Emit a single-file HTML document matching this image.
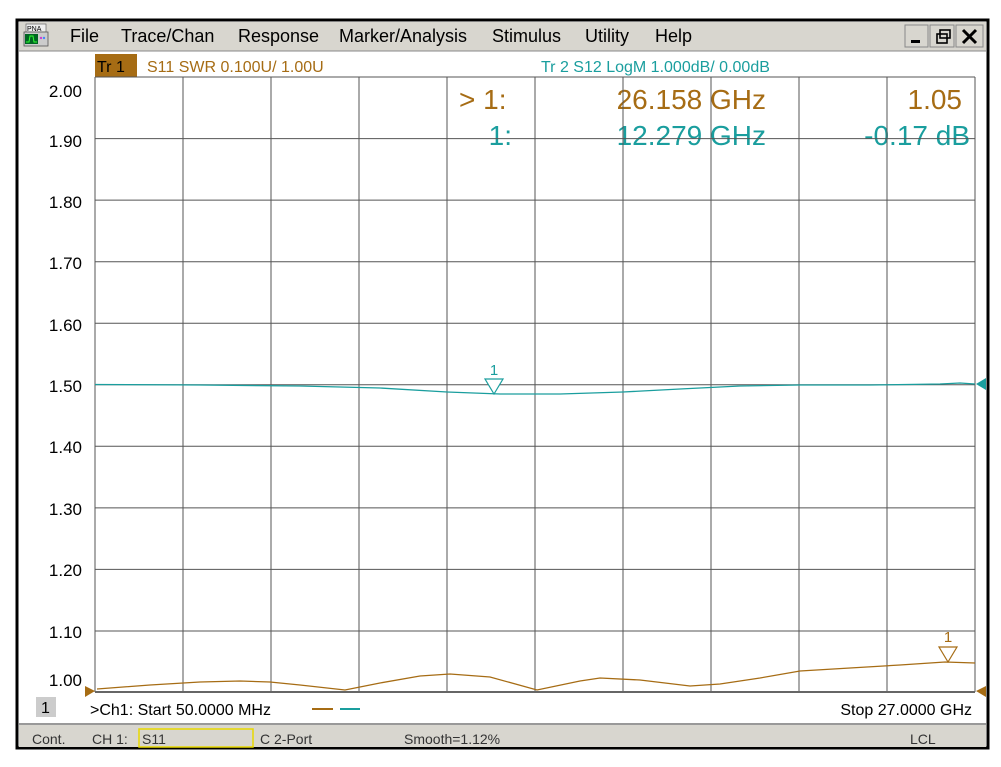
<!DOCTYPE html>
<html><head><style>
body{margin:0;background:#fff;width:1001px;height:762px;overflow:hidden;font-family:"Liberation Sans",sans-serif;}
</style></head><body>
<svg width="1001" height="762" xmlns="http://www.w3.org/2000/svg" font-family="Liberation Sans, sans-serif">
<rect x="0" y="0" width="1001" height="762" fill="#fff"/>
<!-- outer frame -->
<rect x="17" y="20" width="971" height="728" fill="#fff" stroke="#000" stroke-width="3"/>
<!-- menu bar -->
<rect x="19" y="22" width="967" height="29" fill="#d8d6cf"/>
<line x1="19" y1="51" x2="986" y2="51" stroke="#888" stroke-width="1"/>
<!-- PNA icon -->
<rect x="26" y="24" width="20" height="8" fill="#eee" stroke="#666" stroke-width="0.7"/>
<text x="27" y="31" font-size="7" fill="#000">PNA</text>
<rect x="24" y="32" width="24" height="14" fill="#ccc" stroke="#555" stroke-width="0.8"/>
<rect x="25" y="34" width="13" height="10" fill="#062"/>
<path d="M26 42 L29 42 L30 36 L33 36 L34 42 L37 42" stroke="#3f3" fill="none" stroke-width="1"/>
<circle cx="41" cy="38" r="1.2" fill="#c4c"/><circle cx="44" cy="38" r="1.2" fill="#48f"/>
<g font-size="18" fill="#000">
<text x="70" y="42">File</text>
<text x="121" y="42">Trace/Chan</text>
<text x="238" y="42">Response</text>
<text x="339" y="42">Marker/Analysis</text>
<text x="492" y="42">Stimulus</text>
<text x="585" y="42">Utility</text>
<text x="655" y="42">Help</text>
</g>
<!-- window buttons -->
<g stroke="#888" fill="#d8d6cf">
<rect x="905" y="25" width="23" height="22"/><rect x="930" y="25" width="24" height="22"/><rect x="956" y="25" width="27" height="22"/>
</g>
<rect x="911" y="40" width="9" height="3" fill="#000"/>
<rect x="937" y="34" width="10" height="9" fill="none" stroke="#000" stroke-width="1.6"/>
<rect x="940" y="30" width="10" height="8" fill="none" stroke="#000" stroke-width="1.6"/>
<path d="M963 30 L976 43 M976 30 L963 43" stroke="#000" stroke-width="3"/>
<!-- trace header -->
<rect x="95" y="54" width="42" height="23" fill="#a66c14"/>
<text x="97" y="72" font-size="16" fill="#000">Tr 1</text>
<text x="147" y="72" font-size="16" fill="#a66c14">S11 SWR 0.100U/  1.00U</text>
<text x="541" y="72" font-size="16" fill="#1a9e9e">Tr  2   S12 LogM 1.000dB/  0.00dB</text>
<!-- marker readouts -->
<g font-size="28">
<text x="459" y="109" fill="#a66c14">&gt; 1:</text>
<text x="766" y="109" fill="#a66c14" text-anchor="end">26.158 GHz</text>
<text x="962" y="109" fill="#a66c14" text-anchor="end">1.05</text>
<text x="512" y="145" fill="#1a9e9e" text-anchor="end">1:</text>
<text x="766" y="145" fill="#1a9e9e" text-anchor="end">12.279 GHz</text>
<text x="970" y="145" fill="#1a9e9e" text-anchor="end">-0.17 dB</text>
</g>
<!-- grid -->
<g stroke="#555" stroke-width="1">
<line x1="95" y1="77" x2="975" y2="77"/>
<line x1="95" y1="138.6" x2="975" y2="138.6"/>
<line x1="95" y1="200.1" x2="975" y2="200.1"/>
<line x1="95" y1="261.7" x2="975" y2="261.7"/>
<line x1="95" y1="323.2" x2="975" y2="323.2"/>
<line x1="95" y1="384.8" x2="975" y2="384.8"/>
<line x1="95" y1="446.3" x2="975" y2="446.3"/>
<line x1="95" y1="507.9" x2="975" y2="507.9"/>
<line x1="95" y1="569.4" x2="975" y2="569.4"/>
<line x1="95" y1="631" x2="975" y2="631"/>
<line x1="183" y1="77" x2="183" y2="692"/><line x1="271" y1="77" x2="271" y2="692"/>
<line x1="359" y1="77" x2="359" y2="692"/><line x1="447" y1="77" x2="447" y2="692"/>
<line x1="535" y1="77" x2="535" y2="692"/><line x1="623" y1="77" x2="623" y2="692"/>
<line x1="711" y1="77" x2="711" y2="692"/><line x1="799" y1="77" x2="799" y2="692"/>
<line x1="887" y1="77" x2="887" y2="692"/>
<line x1="95" y1="77" x2="95" y2="692"/><line x1="975" y1="77" x2="975" y2="692"/>
</g>
<line x1="95" y1="692" x2="975" y2="692" stroke="#666" stroke-width="2"/>
<!-- y labels -->
<g font-size="17" fill="#000" text-anchor="end">
<text x="82" y="97">2.00</text><text x="82" y="147">1.90</text><text x="82" y="208">1.80</text>
<text x="82" y="269">1.70</text><text x="82" y="331">1.60</text><text x="82" y="392">1.50</text>
<text x="82" y="453">1.40</text><text x="82" y="515">1.30</text><text x="82" y="576">1.20</text>
<text x="82" y="638">1.10</text><text x="82" y="686">1.00</text>
</g>
<!-- teal trace -->
<polyline fill="none" stroke="#1a9e9e" stroke-width="1.3" points="95,384.5 200,385 300,386 380,388 447,392 500,394 560,394 623,392 680,389 740,386 800,385 870,385 940,384 960,383 975,384"/>
<path d="M485 379 L503 379 L494 394 Z" fill="#fff" stroke="#1a9e9e" stroke-width="1.2"/>
<text x="494" y="375" font-size="15" fill="#1a9e9e" text-anchor="middle">1</text>
<path d="M976 384 L986 378 L986 390 Z" fill="#1a9e9e"/>
<!-- brown trace -->
<polyline fill="none" stroke="#a66c14" stroke-width="1.3" points="97,689 150,685 200,682 240,681 270,682 300,685 345,690 380,683 420,676 450,674 490,677 537,690 580,681 600,678 640,680 690,686 720,684 760,678 800,671 850,668 900,665 945,662 975,663"/>
<path d="M939 647 L957 647 L948 662 Z" fill="#fff" stroke="#a66c14" stroke-width="1.2"/>
<text x="948" y="642" font-size="15" fill="#a66c14" text-anchor="middle">1</text>
<path d="M85 686 L95 691 L85 697 Z" fill="#a66c14"/>
<path d="M986 686 L976 691 L986 697 Z" fill="#a66c14"/>
<!-- bottom info -->
<rect x="36" y="697" width="20" height="20" fill="#ccc"/>
<text x="41" y="713" font-size="16" fill="#000">1</text>
<text x="90" y="715" font-size="16" fill="#000">&gt;Ch1: Start  50.0000 MHz</text>
<line x1="312" y1="709" x2="333" y2="709" stroke="#a66c14" stroke-width="2"/>
<line x1="340" y1="709" x2="360" y2="709" stroke="#1a9e9e" stroke-width="2"/>
<text x="972" y="715" font-size="16" fill="#000" text-anchor="end">Stop  27.0000 GHz</text>
<!-- status bar -->
<rect x="19" y="723" width="967" height="24" fill="#d8d6cf"/>
<line x1="19" y1="724" x2="986" y2="724" stroke="#999" stroke-width="2"/>
<g font-size="14" fill="#333">
<text x="32" y="744">Cont.</text>
<text x="92" y="744">CH 1:</text>
<text x="142" y="744">S11</text>
<text x="260" y="744">C  2-Port</text>
<text x="404" y="744">Smooth=1.12%</text>
<text x="910" y="744">LCL</text>
</g>
<rect x="139" y="729" width="114" height="18" fill="none" stroke="#e8d800" stroke-width="1.5"/>
</svg>
</body></html>
